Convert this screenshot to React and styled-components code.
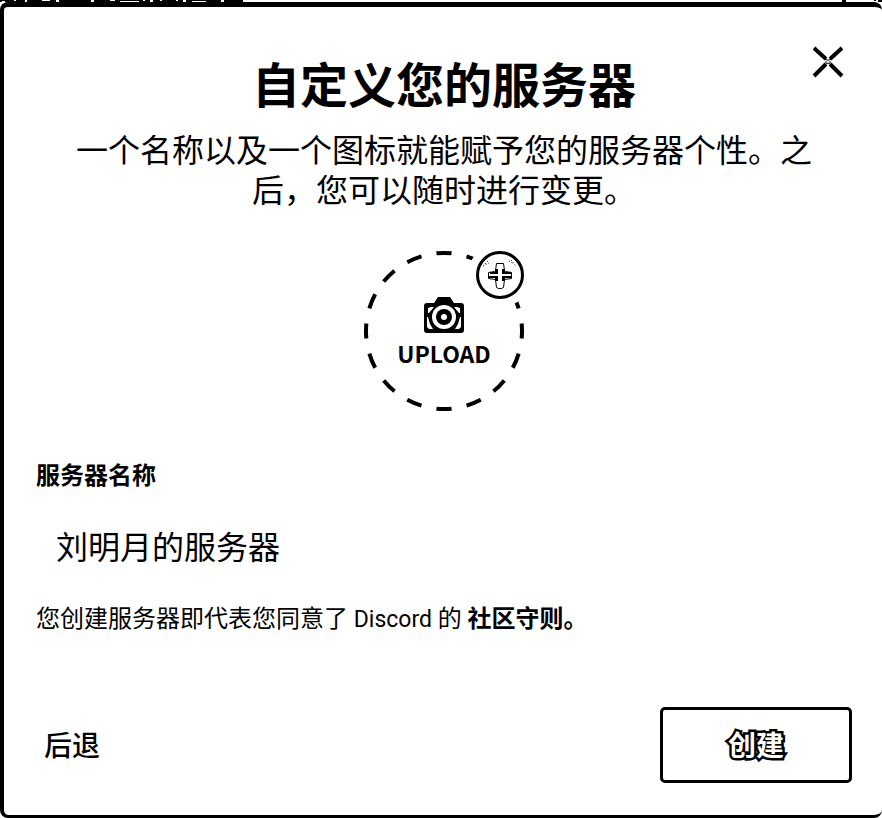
import React, { useState } from "react";
import styled, { createGlobalStyle } from "styled-components";

const GlobalStyle = createGlobalStyle`
  *, *::before, *::after { box-sizing: border-box; }
  body {
    margin: 0;
    background: #fff;
    color: #000;
    font-family: "Noto Sans CJK SC", sans-serif;
  }
`;

const Strip = styled.svg`
  display: block;
  width: 100%;
  height: 2px;
`;

const Dialog = styled.section`
  display: flex;
  flex-direction: column;
  border: solid #000;
  border-width: 5px 0 3px 4px;
  border-radius: 8px;
  padding: 45px 30px 32px 32px;
  position: relative;
`;

const Close = styled.button`
  position: absolute;
  top: 39px;
  right: 38px;
  display: flex;
  padding: 0;
  border: 0;
  background: none;
  color: inherit;
  cursor: pointer;
`;

const Title = styled.h1`
  margin: 0;
  font-size: 48px;
  line-height: 60px;
  font-weight: 700;
  text-align: center;
`;

const Lead = styled.p`
  margin: 16px 36px 0;
  font-size: 32px;
  line-height: 40px;
  text-align: center;
`;

const Upload = styled.button`
  align-self: center;
  position: relative;
  display: flex;
  flex-direction: column;
  align-items: center;
  width: 160px;
  height: 160px;
  margin: 43px 0 0;
  padding: 46px 0 0;
  border: 0;
  background: none;
  color: inherit;
  font: 700 23px/40px "Noto Sans CJK SC", sans-serif;
  cursor: pointer;
`;

const Ring = styled.svg`
  position: absolute;
  inset: 0;
`;

const Label = styled.label`
  margin-top: 43px;
  font-size: 24px;
  line-height: 40px;
  font-weight: 700;
`;

const Field = styled.input`
  width: 100%;
  height: 80px;
  margin-top: 11px;
  padding: 0 20px;
  border: 0;
  background: none;
  color: inherit;
  font: 400 32px/40px "Noto Sans CJK SC", sans-serif;
  outline: none;
`;

const Note = styled.p`
  margin: 14px 0 0;
  font-size: 24px;
  line-height: 36px;
`;

const Latin = styled.span`
  font-family: Roboto, sans-serif;
  font-size: 23px;
  line-height: 1;
`;

const Guidelines = styled.a`
  color: inherit;
  font-weight: 700;
  text-decoration: none;
`;

const Footer = styled.footer`
  display: flex;
  align-items: center;
  justify-content: space-between;
  margin-top: 72px;
`;

const Button = styled.button`
  min-width: ${(p) => (p.$primary ? "192px" : "0")};
  height: 76px;
  padding: 0 8px 2px;
  border: ${(p) => (p.$primary ? "3px solid #000" : "0")};
  border-radius: 5px;
  background: none;
  color: ${(p) => (p.$primary ? "#fff" : "#000")};
  font: ${(p) => (p.$primary ? 700 : 500)} 28px/40px "Noto Sans CJK SC", sans-serif;
  -webkit-text-stroke: ${(p) => (p.$primary ? "5px #000" : "0")};
  paint-order: stroke fill;
  cursor: pointer;
`;

export default function App() {
  const [name, setName] = useState("刘明月的服务器");
  return (
    <>
      <GlobalStyle />
      <Strip aria-hidden="true">
        <path d="M0 0H243V2H0Z M842 0H846V2H842Z M874 0h2v1h-2z M878 0h4v2h-4z" />
        <path
          fill="#fff"
          d="M2 1h3v1h-3z M14 0h2v1h-2z M25 0h2v2h-2z M42 0h8v1h-8z M56 0h3v2h-3z M91 0h3v2h-3z M110 0h5v1h-5z M120 1h19v1h-19z M143 0h2v1h-2z M150 0h3v2h-3z M160 0h2v1h-2z M176 0h2v1h-2z M183 0h3v2h-3z M192 1h14v1h-14z M221 0h3v2h-3z"
        />
      </Strip>
      <Dialog role="dialog" aria-labelledby="title">
        <Close aria-label="关闭">
          <svg width="32" height="32" viewBox="0 0 32 32" stroke="#000" fill="none">
            <path strokeWidth="4" d="M2 2 14 13M18 18 30 30M30 2 18 13M14 18 2 30" />
            <path strokeWidth="1" d="M13 13l2 1h2l2-1M13 16h2M17 16h2M14 18l2-1 2 1" />
          </svg>
        </Close>
        <Title id="title">自定义您的服务器</Title>
        <Lead>一个名称以及一个图标就能赋予您的服务器个性。之后，您可以随时进行变更。</Lead>
        <Upload type="button">
          <Ring width="160" height="160" viewBox="0 0 160 160" fill="none" stroke="#000">
            <circle cx="80" cy="80" r="78" strokeWidth="4" pathLength="160" strokeDasharray="5 5" strokeDashoffset="2.5" />
            <circle cx="136" cy="24" r="32" fill="#fff" stroke="none" />
            <circle cx="136" cy="24" r="22.5" strokeWidth="3" />
            <path
              strokeWidth="1"
              d="M132.500 12.500h7l1 7 1 1 6 1v6l-7 1-1 8-2 1h-3l-2-1-1-8-7-1v-6l6-1 1-1z"
            />
            <path
              fill="#000"
              stroke="none"
              d="M131 18h3v5h-8v-2h5zM138 18h3v3h6v2h-9zM125 25h9v5h-3v-3h-6zM138 25h9v2h-6v3h-3z"
            />
            <path strokeWidth="1" strokeDasharray="1 2" d="M121 13l4-4M119 15l6-3M147 9l5 6M145 10l5 3" />
          </Ring>
          <svg width="40" height="36" viewBox="0 0 40 36">
            <path d="M14 0h12l4 6h7a3 3 0 0 1 3 3v24a3 3 0 0 1-3 3H3a3 3 0 0 1-3-3V9a3 3 0 0 1 3-3h7z" />
            <path
              fill="#fff"
              d="M4 11l3-1h3l-5 6H4zM30 10h3l3 1v5h-1zM3 20h1l2 7 3 5H5l-2-2zM36 20h1v10l-2 2h-4l3-5z"
            />
            <circle cx="20" cy="20" r="12" fill="#fff" />
            <circle cx="20" cy="20" r="8" />
            <circle cx="20" cy="20" r="3" fill="#fff" />
          </svg>
          UPLOAD
        </Upload>
        <Label htmlFor="name">服务器名称</Label>
        <Field id="name" value={name} onChange={(e) => setName(e.target.value)} />
        <Note>
          您创建服务器即代表您同意了<Latin> Discord </Latin>的
          <Latin> </Latin>
          <Guidelines href="#guidelines">社区守则。</Guidelines>
        </Note>
        <Footer>
          <Button type="button">后退</Button>
          <Button type="button" $primary>创建</Button>
        </Footer>
      </Dialog>
    </>
  );
}
